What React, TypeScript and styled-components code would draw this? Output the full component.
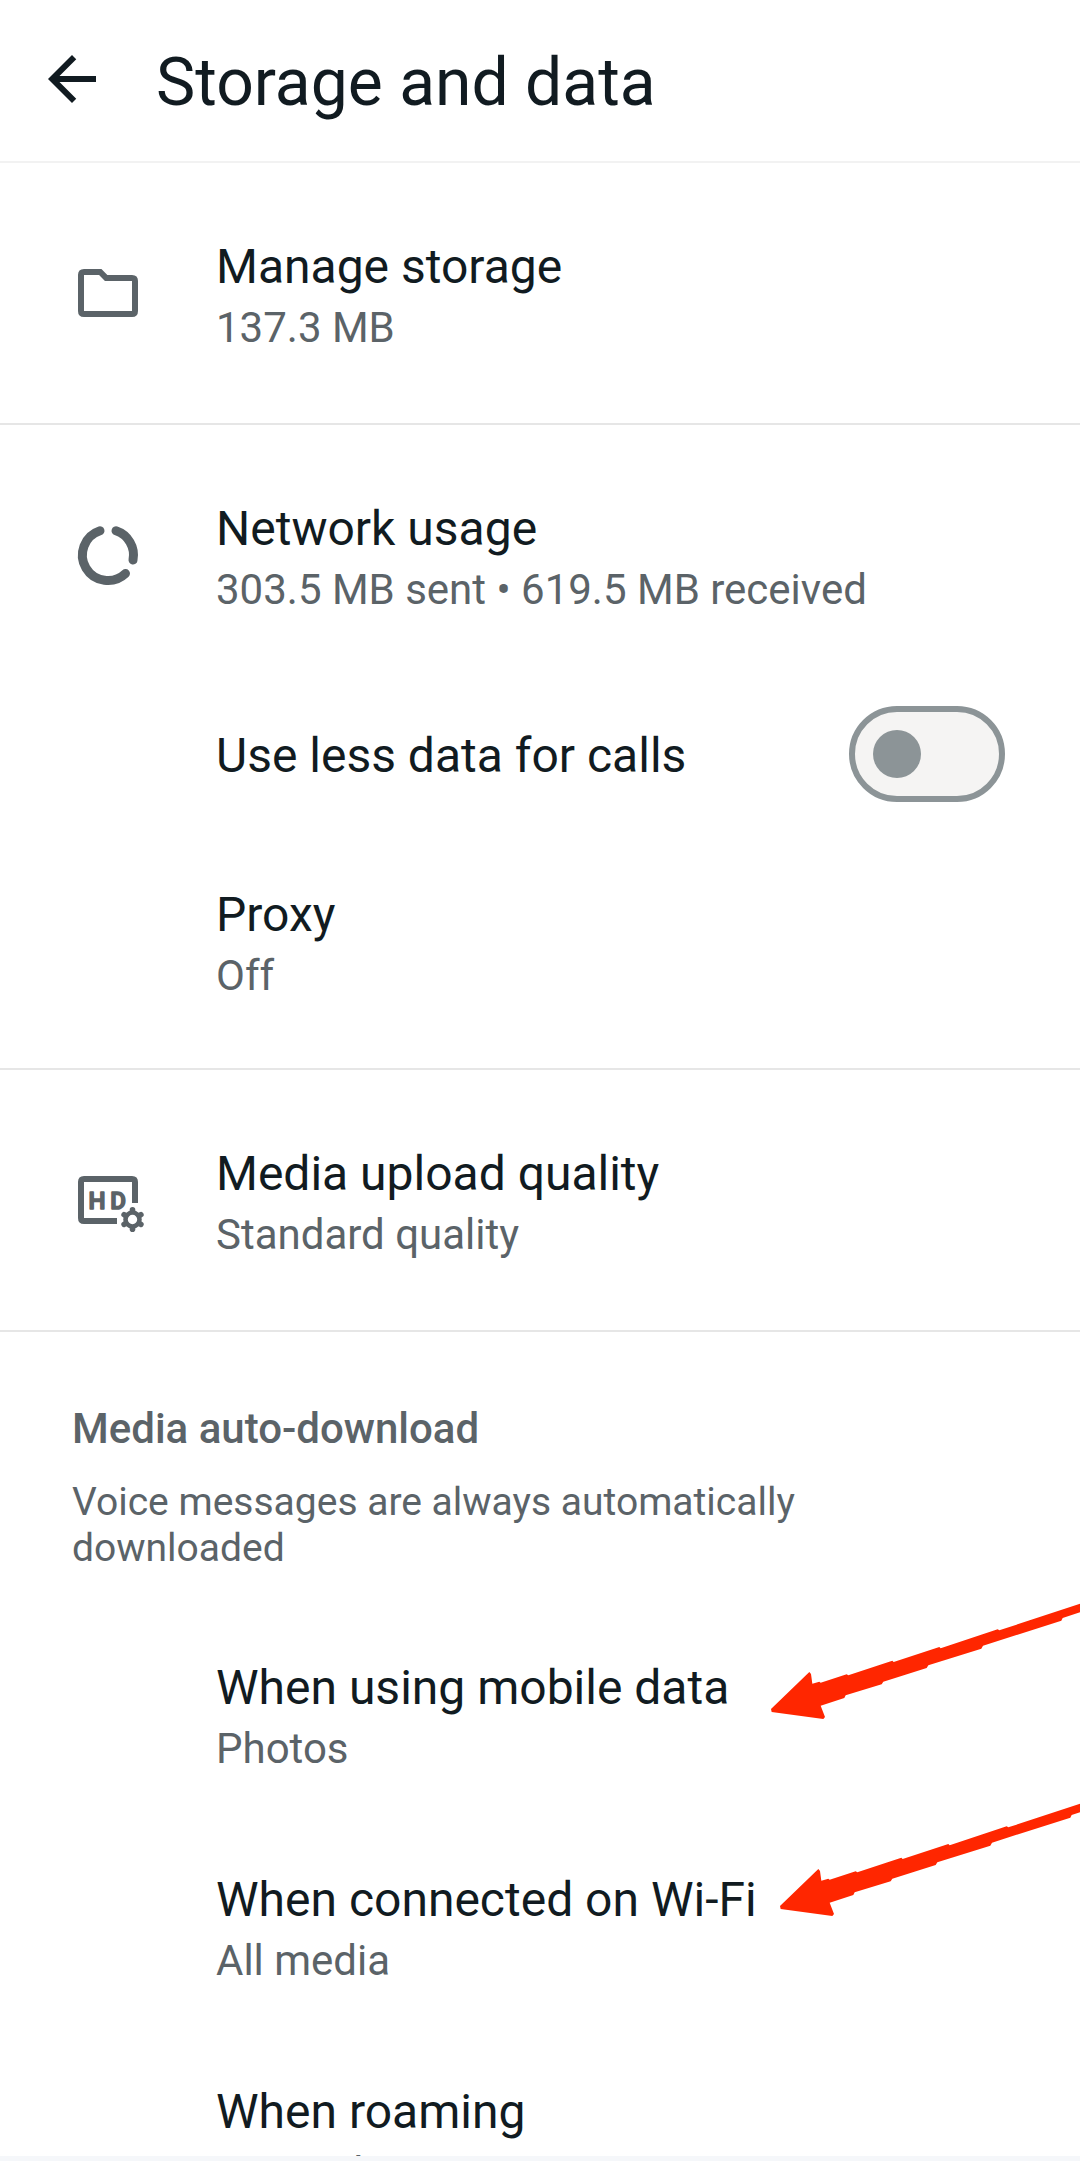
import React, { useState } from "react";
import styled, { createGlobalStyle } from "styled-components";

const ink = "#111b21";
const muted = "#5b6368";

const GlobalStyle = createGlobalStyle`
  * { box-sizing: border-box; }
  body {
    margin: 0;
    background: #fff;
    font-family: Roboto, "Noto Sans", sans-serif;
    color: ${ink};
  }
`;

const Screen = styled.div`
  display: flex;
  flex-direction: column;
  height: 100vh;
  overflow: hidden;
`;

const Header = styled.header`
  flex: none;
  display: flex;
  align-items: center;
  gap: 48px;
  height: 163px;
  padding: 0 36px 3px;
  border-bottom: 2px solid #f2f2f2;
`;

const BackButton = styled.button`
  display: flex;
  padding: 0;
  border: 0;
  background: none;
  color: inherit;
  cursor: pointer;
`;

const Title = styled.h1`
  margin: 0;
  padding-top: 8px;
  font-size: 66px;
  line-height: 78px;
  font-weight: 400;
`;

const Content = styled.main`
  flex: 1;
  min-height: 0;
  overflow-x: hidden;
  overflow-y: auto;
  scrollbar-width: none;
`;

const NavigationStrip = styled.div`
  flex: none;
  height: 5px;
  background: #f5f7fa;
`;

const Section = styled.section<{ $bottom?: number }>`
  padding: 24px 0 ${(p) => p.$bottom ?? 24}px;
  & + & {
    border-top: 2px solid #e6e6e6;
  }
`;

const Item = styled.button`
  position: relative;
  display: grid;
  grid-template-columns: 72px 1fr;
  column-gap: 72px;
  align-items: center;
  width: 100%;
  height: 212px;
  padding: 0 75px 0 72px;
  border: 0;
  background: none;
  color: ${muted};
  font: inherit;
  text-align: left;
  cursor: pointer;
`;

const ItemText = styled.span`
  grid-column: 2;
  display: flex;
  flex-direction: column;
  gap: 8px;
  padding-top: 6px;
`;

const ItemTitle = styled.span`
  color: ${ink};
  font-size: 48px;
  line-height: 56px;
`;

const ItemDetail = styled.span`
  font-size: 42px;
  line-height: 50px;
`;

const SwitchItem = styled.label`
  display: flex;
  align-items: center;
  justify-content: space-between;
  height: 174px;
  padding: 12px 75px 0 216px;
  cursor: pointer;

  ${ItemTitle} {
    padding-top: 3px;
  }
`;

const Switch = styled.input`
  appearance: none;
  display: flex;
  align-items: center;
  width: 156px;
  height: 96px;
  margin: 0;
  padding: 0 18px;
  border: 6px solid #8c9497;
  border-radius: 48px;
  background: #f5f4f3;
  cursor: pointer;

  &::before {
    content: "";
    width: 48px;
    height: 48px;
    border-radius: 50%;
    background: #8c9497;
  }

  &:checked {
    justify-content: flex-end;
  }
`;

const SectionIntro = styled.div`
  padding: 48px 75px 37px 72px;
  color: ${muted};
`;

const SectionTitle = styled.h2`
  margin: 0 0 25px;
  font-size: 42px;
  line-height: 50px;
  font-weight: 500;
`;

const SectionNote = styled.p`
  margin: 0;
  font-size: 39px;
  line-height: 46px;
`;

const Pointer = styled.svg<{ $top: number; $right: number }>`
  position: absolute;
  top: ${(p) => p.$top}px;
  right: ${(p) => p.$right}px;
  width: 310px;
  height: 118px;
  pointer-events: none;
`;

function BackIcon() {
  return (
    <svg width="72" height="72" viewBox="0 0 24 24" fill="currentColor" aria-hidden="true">
      <path d="M20 11H7.83l5.59-5.59L12 4l-8 8 8 8 1.41-1.41L7.83 13H20v-2z" />
    </svg>
  );
}

function FolderIcon() {
  return (
    <svg width="72" height="72" viewBox="0 0 72 72" fill="none" stroke="currentColor" strokeWidth="6" aria-hidden="true">
      <path d="M12 15H28.2L34.2 21H60Q63 21 63 24V54Q63 57 60 57H12Q9 57 9 54V18Q9 15 12 15Z" />
    </svg>
  );
}

function DataUsageIcon() {
  return (
    <svg width="72" height="72" viewBox="0 0 72 72" fill="none" stroke="currentColor" strokeWidth="9" strokeLinecap="round" aria-hidden="true">
      <path d="M28 11.8A25.5 25.5 0 1 0 53.5 54.5" />
      <path d="M44 11.8A25.5 25.5 0 0 1 61 41" />
    </svg>
  );
}

function MediaQualityIcon() {
  const teeth = [0, 60, 120, 180, 240, 300];
  return (
    <svg width="72" height="72" viewBox="0 0 72 72" overflow="visible" fill="none" stroke="currentColor" aria-hidden="true">
      <path d="M45 57H12Q9 57 9 54V18Q9 15 12 15H60Q63 15 63 18V39" strokeWidth="6" />
      <text y="44.5" textAnchor="middle" fontFamily="Roboto, sans-serif" fontSize="24" fontWeight="500" fill="currentColor" strokeWidth="1.6" strokeLinejoin="round">
        <tspan x="25">H</tspan>
        <tspan x="46">D</tspan>
      </text>
      <circle cx="60.5" cy="55.5" r="7" strokeWidth="4.6" />
      {teeth.map((angle) => (
        <path key={angle} d="M60.5 46.6V45.8" strokeWidth="5.6" strokeLinecap="round" transform={`rotate(${angle} 60.5 55.5)`} />
      ))}
    </svg>
  );
}

function RedArrow({ top, right }: { top: number; right: number }) {
  return (
    <Pointer $top={top} $right={right} viewBox="90 70 930 354" fill="#ff2600" aria-hidden="true">
      <path d="M93 388L208 277L213 283L217 312L238 306L242 309L320 284L325 287L457 243L461 247L598 202L602 206L773 149L778 152L1020 72V98L968 115L964 123L729 198L724 207L565 257L560 265L430 306L425 314L317 347L313 355L242 378L255 412L250 418L95 397Z" />
    </Pointer>
  );
}

type ItemProps = {
  title: string;
  detail: string;
  icon?: React.ReactNode;
  children?: React.ReactNode;
};

function SettingsItem({ title, detail, icon, children }: ItemProps) {
  return (
    <Item type="button">
      {icon}
      <ItemText>
        <ItemTitle>{title}</ItemTitle>
        <ItemDetail>{detail}</ItemDetail>
      </ItemText>
      {children}
    </Item>
  );
}

export default function App() {
  const [lessData, setLessData] = useState(false);

  return (
    <Screen>
      <GlobalStyle />
      <Header>
        <BackButton type="button" aria-label="Back">
          <BackIcon />
        </BackButton>
        <Title>Storage and data</Title>
      </Header>
      <Content>
        <Section>
          <SettingsItem title="Manage storage" detail="137.3 MB" icon={<FolderIcon />} />
        </Section>
        <Section $bottom={21}>
          <SettingsItem title="Network usage" detail="303.5 MB sent • 619.5 MB received" icon={<DataUsageIcon />} />
          <SwitchItem htmlFor="less-data">
            <ItemTitle>Use less data for calls</ItemTitle>
            <Switch
              id="less-data"
              type="checkbox"
              role="switch"
              checked={lessData}
              onChange={(event) => setLessData(event.target.checked)}
            />
          </SwitchItem>
          <SettingsItem title="Proxy" detail="Off" />
        </Section>
        <Section>
          <SettingsItem title="Media upload quality" detail="Standard quality" icon={<MediaQualityIcon />} />
        </Section>
        <Section>
          <SectionIntro>
            <SectionTitle>Media auto-download</SectionTitle>
            <SectionNote>Voice messages are always automatically downloaded</SectionNote>
          </SectionIntro>
          <SettingsItem title="When using mobile data" detail="Photos">
            <RedArrow top={-5} right={0} />
          </SettingsItem>
          <SettingsItem title="When connected on Wi-Fi" detail="All media">
            <RedArrow top={-20} right={-9} />
          </SettingsItem>
          <SettingsItem title="When roaming" detail="No media" />
        </Section>
      </Content>
      <NavigationStrip />
    </Screen>
  );
}
